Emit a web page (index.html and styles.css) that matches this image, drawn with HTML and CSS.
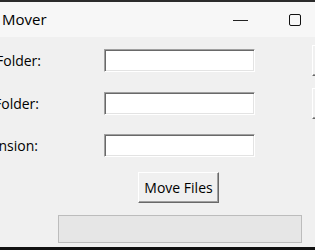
FILE: index.html
```html
<!DOCTYPE html>
<html>
<head>
<meta charset="utf-8">
<link rel="stylesheet" href="styles.css">
</head>
<body>
<div class="window">
  <div class="titlebar">
    <span class="title">Mover</span>
    <div class="controls">
      <span class="ctl ctl-min"><span class="min-line"></span></span>
      <span class="ctl ctl-max"><span class="max-box"></span></span>
    </div>
  </div>
  <div class="content">
    <div class="form">
      <div class="label"><span>Source Folder:</span></div>
      <div class="entry"></div>
      <div class="browse">Browse</div>
      <div class="label label-2"><span>Target Folder:</span></div>
      <div class="entry"></div>
      <div class="browse">Browse</div>
      <div class="label label-3"><span>File Extension:</span></div>
      <div class="entry"></div>
      <div></div>
    </div>
    <div class="actions">
      <button class="button">Move Files</button>
    </div>
    <div class="progress"></div>
  </div>
</div>
</body>
</html>
```

FILE: styles.css
```css
html, body {
  margin: 0;
  padding: 0;
}
body {
  width: 315px;
  height: 250px;
  overflow: hidden;
  background: #f0f0f0;
  font-family: "Open Sans", "Noto Sans", sans-serif;
  font-size: 14px;
  color: #000;
}
.window {
  width: 315px;
  height: 250px;
  box-sizing: border-box;
  border-top: 2px solid #2b2b2b;
  border-bottom: 3px solid #111;
  display: flex;
  flex-direction: column;
  overflow: hidden;
}
.titlebar {
  height: 35px;
  flex: none;
  background: #f7f7f7;
  display: flex;
  align-items: center;
  justify-content: space-between;
}
.title {
  padding-left: 2px;
  font-size: 15px;
  margin-top: -1px;
}
.controls {
  display: flex;
  align-items: center;
  height: 100%;
}
.ctl {
  display: flex;
  align-items: center;
  justify-content: center;
  height: 100%;
}
.ctl-min {
  width: 15px;
  margin-right: 40px;
}
.min-line {
  width: 15px;
  height: 1px;
  background: #222;
  margin-top: 2px;
}
.ctl-max {
  width: 14px;
  margin-right: 13px;
}
.max-box {
  width: 10px;
  height: 10px;
  border: 1.5px solid #111;
  border-radius: 2px;
}
.content {
  flex: 1;
  background: #f0f0f0;
  padding-top: 12px;
}
.form {
  display: grid;
  grid-template-columns: 104px 151px 1fr;
  grid-auto-rows: 23px;
  row-gap: 19.5px;
  align-items: center;
}
.label {
  display: flex;
  justify-content: flex-end;
  padding-right: 63px;
  white-space: nowrap;
  min-width: 0;
}
.label span {
  flex: none;
}
.label-2 {
  padding-right: 65px;
}
.label-3 {
  padding-right: 66px;
}
.entry {
  height: 23px;
  box-sizing: border-box;
  background: #fff;
  border-style: solid;
  border-width: 1px;
  border-color: #a0a0a0 #ffffff #ffffff #a0a0a0;
  box-shadow: inset 1px 1px 0 #696969, inset -1px -1px 0 #e3e3e3;
}
.browse {
  margin-left: 57px;
  height: 31px;
  width: 80px;
  box-sizing: border-box;
  border-style: solid;
  border-width: 1px;
  border-color: #ffffff #696969 #696969 #ffffff;
  box-shadow: inset -1px -1px 0 #a0a0a0;
  background: #f0f0f0;
  white-space: nowrap;
  padding-left: 12px;
  line-height: 28px;
}
.actions {
  margin-left: 104px;
  width: 151px;
  margin-top: 15px;
  display: flex;
  justify-content: center;
}
.button {
  margin-left: -2px;
  width: 81px;
  height: 31px;
  box-sizing: border-box;
  padding: 0;
  font-family: inherit;
  font-size: 14px;
  color: #000;
  background: #f0f0f0;
  border-style: solid;
  border-width: 1px;
  border-color: #ffffff #696969 #696969 #ffffff;
  box-shadow: inset -1px -1px 0 #a0a0a0;
  border-radius: 0;
}
.progress {
  margin: 12px 0 0 58px;
  width: 244px;
  height: 28px;
  box-sizing: border-box;
  border: 1px solid #bcbcbc;
  background: #e6e6e6;
}
```
